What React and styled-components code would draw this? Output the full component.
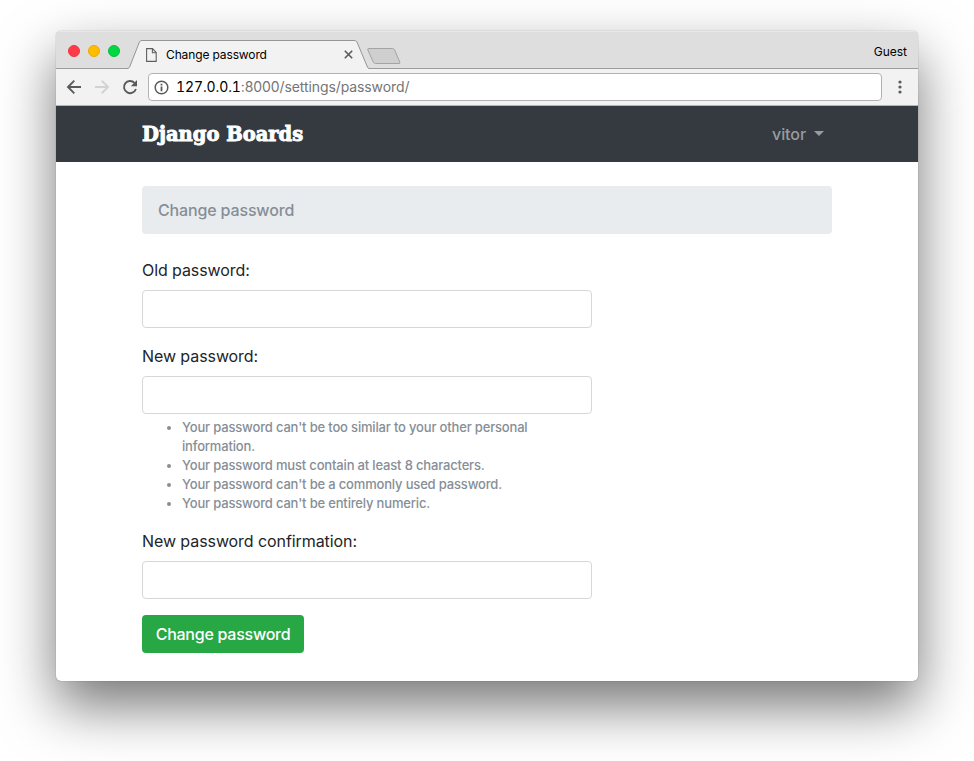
import React from "react";
import styled, { createGlobalStyle } from "styled-components";

const GlobalStyle = createGlobalStyle`
  *, *::before, *::after { box-sizing: border-box; }
  body {
    margin: 0;
    background: #fff;
    color: #212529;
    font: 400 16px/24px Inter, "Liberation Sans", sans-serif;
    letter-spacing: -0.08px;
  }
`;

const Desktop = styled.main`
  height: 761px;
  padding: 31px 56px 80px;
  overflow: hidden;
`;

const BrowserWindow = styled.div`
  width: 862px;
  height: 650px;
  border-radius: 5px;
  overflow: hidden;
  background: #fff;
  box-shadow: 0 0 1px rgba(0, 0, 0, 0.5), 0 25px 55px rgba(0, 0, 0, 0.54);
`;

const TabStrip = styled.div`
  display: flex;
  height: 38px;
  padding-left: 12px;
  background: #dedede;
  box-shadow: inset 0 1px #e8e8e8, inset 0 -1px #9c9c9c;
`;

const TrafficLights = styled.div`
  display: flex;
  gap: 8px;
  padding-top: 14px;
`;

const Light = styled.span`
  width: 12px;
  height: 12px;
  border-radius: 50%;
  background: ${(p) => p.$fill};
  border: 1px solid ${(p) => p.$edge};
`;

const Tab = styled.div`
  position: relative;
  display: flex;
  width: 243px;
  height: 38px;
  margin-left: 7px;
  padding: 9px 0 0 19px;
`;

const TabShape = styled.svg`
  position: absolute;
  inset: 0;
`;

const TabContent = styled.div`
  position: relative;
  display: flex;
  align-items: center;
  width: 207px;
  height: 29px;
`;

const TabTitle = styled.span`
  flex: 1;
  margin-left: 9px;
  color: #000;
  font-size: 12px;
  line-height: 16px;
  letter-spacing: -0.13px;
`;

const NewTab = styled.svg`
  margin: 16px 0 0 -4px;
`;

const Guest = styled.span`
  margin: 13px 11px 0 auto;
  color: #000;
  font-size: 12px;
  line-height: 16px;
  letter-spacing: 0;
`;

const Toolbar = styled.div`
  display: flex;
  align-items: center;
  height: 37px;
  padding: 0 10px;
  background: #f2f2f2;
  border-bottom: 1px solid #b4b4b4;
`;

const NavIcons = styled.div`
  display: flex;
  gap: 12px;
  width: 82px;
`;

const AddressBar = styled.div`
  display: flex;
  align-items: center;
  width: 734px;
  height: 28px;
  padding-left: 5px;
  background: #fff;
  border: 1px solid #b3b3b3;
  border-radius: 4px;
`;

const Url = styled.span`
  margin-left: 7px;
  color: #757575;
  font-size: 14px;
  line-height: 20px;
  letter-spacing: -0.1px;
`;

const Host = styled.span`
  color: #000;
  font-variant-numeric: tabular-nums;
`;

const MenuDots = styled.svg`
  margin-left: 10px;
`;

const Navbar = styled.header`
  display: flex;
  align-items: center;
  justify-content: space-between;
  height: 56px;
  padding: 0 94px 0 86px;
  background: #343a40;
`;

const Brand = styled.span`
  padding-top: 1px;
  color: #fff;
  font: 700 19.5px/30px "DejaVu Serif", serif;
  letter-spacing: 0;
  -webkit-text-stroke: 0.9px #fff;
`;

const UserMenu = styled.span`
  display: flex;
  align-items: center;
  color: #999c9f;
  font-weight: 550;
`;

const Caret = styled.span`
  margin: -2px 0 0 8px;
  border: 5px solid transparent;
  border-top-color: currentColor;
  border-bottom: 0;
`;

const Content = styled.div`
  padding: 24px 86px 0;
`;

const Breadcrumb = styled.div`
  height: 48px;
  margin-bottom: 24px;
  padding: 12px 16px;
  border-radius: 4px;
  background: #e9ecef;
  color: #868e96;
  font-weight: 450;
  letter-spacing: -0.15px;
`;

const Form = styled.form`
  width: 450px;
`;

const Field = styled.div`
  margin-bottom: 16px;
`;

const Label = styled.label`
  display: block;
  margin-bottom: 8px;
`;

const Input = styled.input`
  display: block;
  width: 100%;
  height: 38px;
  padding: 6px 12px;
  border: 1px solid #d6d7d9;
  border-radius: 4px;
  font: inherit;
  outline: 0;
`;

const HelpList = styled.ul`
  margin: 4px 0 0;
  padding-left: 40px;
  color: #868e96;
  font-size: 13px;
  font-weight: 480;
  line-height: 19px;
  letter-spacing: -0.17px;
`;

const Submit = styled.button`
  display: block;
  width: 162px;
  height: 38px;
  padding: 0;
  border: 0;
  border-radius: 4px;
  background: #28a745;
  color: #fff;
  font: 550 16px/24px Inter, "Liberation Sans", sans-serif;
  letter-spacing: -0.25px;
`;

const rules = [
  "Your password can't be too similar to your other personal information.",
  "Your password must contain at least 8 characters.",
  "Your password can't be a commonly used password.",
  "Your password can't be entirely numeric.",
];

export default function App() {
  return (
    <Desktop>
      <GlobalStyle />
      <BrowserWindow>
        <TabStrip>
          <TrafficLights>
            <Light $fill="#ff3b47" $edge="#ee3540" />
            <Light $fill="#ffbd00" $edge="#eeaa00" />
            <Light $fill="#00d742" $edge="#00c43a" />
          </TrafficLights>
          <Tab>
            <TabShape width="243" height="38" viewBox="0 0 243 38">
              <path
                d="M0 37.5 C2 37.5 2.2 36.8 3 35 L12 12 C13 10 13.4 9.5 15 9.5 H227 C229 9.5 229.6 10 230.4 12 L240 35 C240.8 37 241 37.5 243 37.5 V38 H0Z"
                fill="#f2f2f2"
              />
              <path
                d="M0 37.5 C2 37.5 2.2 36.8 3 35 L12 12 C13 10 13.4 9.5 15 9.5 H227 C229 9.5 229.6 10 230.4 12 L240 35 C240.8 37 241 37.5 243 37.5"
                fill="none"
                stroke="#959595"
              />
            </TabShape>
            <TabContent>
              <svg width="11" height="14" viewBox="0 0 11 14" fill="none" stroke="#5f5f5f" strokeWidth="1.1">
                <path d="M.6 .6H6.5L10.2 4.5V13.4H.6Z" />
                <path d="M6.4 .8V4.7H10" />
              </svg>
              <TabTitle>Change password</TabTitle>
              <svg width="9" height="9" viewBox="0 0 9 9" stroke="#5a5a5a" strokeWidth="1.6">
                <path d="M.8 .8L8.2 8.2M8.2 .8L.8 8.2" />
              </svg>
            </TabContent>
          </Tab>
          <NewTab width="36" height="18" viewBox="0 0 36 18">
            <path
              d="M3 1.5H26.5Q28 1.5 28.6 3L33.8 15Q34.4 16.5 33 16.5H9.5Q8 16.5 7.3 15L1.8 3Q1.3 1.5 3 1.5Z"
              fill="#cfcfcf"
              stroke="#a3a3a3"
            />
          </NewTab>
          <Guest>Guest</Guest>
        </TabStrip>
        <Toolbar>
          <NavIcons>
            <svg width="16" height="16" viewBox="0 0 16 16" fill="none" stroke="#5a5a5a" strokeWidth="1.9">
              <path d="M15 8H2.5M8.3 1.7L2 8L8.3 14.3" />
            </svg>
            <svg width="16" height="16" viewBox="0 0 16 16" fill="none" stroke="#d2d2d2" strokeWidth="1.9">
              <path d="M1 8H13.5M7.7 1.7L14 8L7.7 14.3" />
            </svg>
            <svg width="16" height="16" viewBox="0 0 16 16">
              <path d="M13.9 10A6.1 6.1 0 1 1 12.5 3.8" fill="none" stroke="#5a5a5a" strokeWidth="1.9" />
              <path d="M15 1V7.2H8.8Z" fill="#5a5a5a" />
            </svg>
          </NavIcons>
          <AddressBar>
            <svg width="15" height="15" viewBox="0 0 15 15">
              <circle cx="7.5" cy="7.5" r="6.3" fill="none" stroke="#5a5a5a" strokeWidth="1.5" />
              <path d="M6.6 6.5H8.4V11.2H6.6ZM6.6 3.7H8.4V5.4H6.6Z" fill="#5a5a5a" />
            </svg>
            <Url>
              <Host>127.0.0.1</Host>:8000/settings/password/
            </Url>
          </AddressBar>
          <MenuDots width="16" height="16" viewBox="0 0 16 16" fill="#5a5a5a">
            <circle cx="8" cy="3" r="1.6" />
            <circle cx="8" cy="8" r="1.6" />
            <circle cx="8" cy="13" r="1.6" />
          </MenuDots>
        </Toolbar>
        <Navbar>
          <Brand>Django Boards</Brand>
          <UserMenu>
            vitor
            <Caret />
          </UserMenu>
        </Navbar>
        <Content>
          <Breadcrumb>Change password</Breadcrumb>
          <Form>
            <Field>
              <Label htmlFor="old">Old password:</Label>
              <Input id="old" type="password" />
            </Field>
            <Field>
              <Label htmlFor="new">New password:</Label>
              <Input id="new" type="password" />
              <HelpList>
                {rules.map((rule) => (
                  <li key={rule}>{rule}</li>
                ))}
              </HelpList>
            </Field>
            <Field>
              <Label htmlFor="confirm">New password confirmation:</Label>
              <Input id="confirm" type="password" />
            </Field>
            <Submit type="button">Change password</Submit>
          </Form>
        </Content>
      </BrowserWindow>
    </Desktop>
  );
}
